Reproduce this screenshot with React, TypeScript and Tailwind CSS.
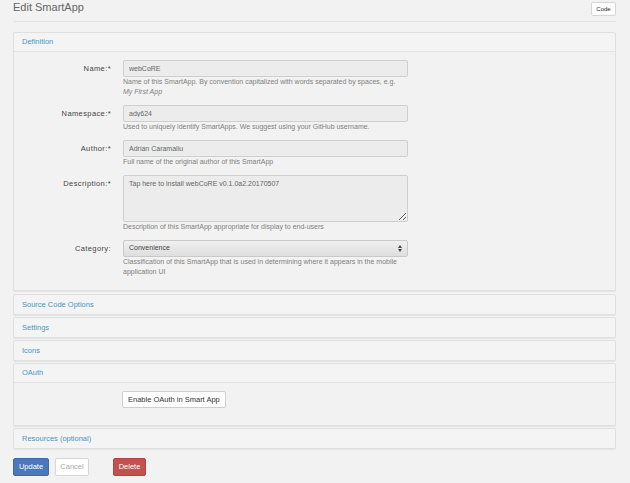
import React from 'react';

const FONT = { fontFamily: '"Liberation Sans", Arial, sans-serif' };

type FieldProps = {
  label: string;
  children: React.ReactNode;
  help?: React.ReactNode;
};

const Field: React.FC<FieldProps> = ({ label, children, help }) => (
  <div className="flex mb-[8px]">
    <div className="w-[97px] shrink-0 text-right text-[7.5px] leading-[17px] text-[#444] tracking-[0.4px]">
      {label}
    </div>
    <div className="ml-[12px] w-[285px]">
      {children}
      {help && <div className="text-[7px] leading-[10px] text-[#808080]">{help}</div>}
    </div>
  </div>
);

const inputCls =
  'block w-full h-[17px] rounded-[2px] border border-[#cfcfcf] bg-[#ececec] px-[5px] text-[7px] text-[#666] outline-none';

const Panel: React.FC<{ title: string; children?: React.ReactNode }> = ({ title, children }) => (
  <div className="mb-[2px] rounded-[2px] border border-[#e0e0e0] bg-[#f4f4f4] shadow-[0_1px_1px_rgba(0,0,0,0.06)]">
    <div className={`h-[19px] px-[8px] flex items-center text-[7.5px] text-[#4b94bf] ${children ? 'border-b border-[#e3e3e3]' : ''}`}>
      {title}
    </div>
    {children && <div className="bg-[#f2f2f2]">{children}</div>}
  </div>
);

export default function App() {
  return (
    <div className="w-[630px] h-[483px] bg-[#f2f2f2] overflow-hidden" style={FONT}>
      <div className="pl-[13px] pr-[14px]">
        {/* header */}
        <div className="flex items-start justify-between h-[22px] border-b border-[#e2e2e2]">
          <div className="text-[11px] font-light text-[#666] leading-[14px]">Edit SmartApp</div>
          <button className="mt-[2px] h-[14px] w-[25px] rounded-[2px] border border-[#d6d6d6] bg-white text-[6px] text-[#222]">
            Code
          </button>
        </div>

        <div className="mt-[10px]">
          <div className="mb-[3px]">
            <Panel title="Definition">
              <div className="pt-[8px] pb-[5px]">
                <Field
                  label="Name:*"
                  help={
                    <>
                      Name of this SmartApp. By convention capitalized with words separated by spaces, e.g.
                      <br />
                      <i>My First App</i>
                    </>
                  }
                >
                  <input className={inputCls} readOnly value="webCoRE" />
                </Field>
                <Field label="Namespace:*" help="Used to uniquely identify SmartApps. We suggest using your GitHub username.">
                  <input className={inputCls} readOnly value="ady624" />
                </Field>
                <Field label="Author:*" help="Full name of the original author of this SmartApp">
                  <input className={inputCls} readOnly value="Adrian Caramaliu" />
                </Field>
                <Field label="Description:*" help="Description of this SmartApp appropriate for display to end-users">
                  <textarea
                    className="block w-full h-[47px] rounded-[2px] border border-[#cfcfcf] bg-[#ececec] px-[5px] py-[3px] text-[7px] leading-[9px] text-[#666] outline-none"
                    readOnly
                    value="Tap here to install webCoRE v0.1.0a2.20170507"
                  />
                </Field>
                <Field
                  label="Category:"
                  help={
                    <>
                      Classification of this SmartApp that is used in determining where it appears in the mobile
                      <br />
                      application UI
                    </>
                  }
                >
                  <div className="flex items-center justify-between h-[17px] rounded-[2px] border border-[#c9c9c9] bg-gradient-to-b from-[#f0f0f0] to-[#dedede] px-[5px] text-[7px] text-[#444]">
                    <span>Convenience</span>
                    <svg width="4" height="7" viewBox="0 0 4 7">
                      <path d="M0 3 L2 0 L4 3 Z M0 4 L2 7 L4 4 Z" fill="#444" />
                    </svg>
                  </div>
                </Field>
              </div>
            </Panel>
          </div>
          <Panel title="Source Code Options" />
          <Panel title="Settings" />
          <Panel title="Icons" />
          <Panel title="OAuth">
            <div className="flex pt-[8px] pb-[17px] pl-[108px]">
              <button className="h-[17px] px-[5px] rounded-[2px] border border-[#cfcfcf] bg-white text-[7.5px] leading-none text-[#333]">
                Enable OAuth in Smart App
              </button>
            </div>
          </Panel>
          <Panel title="Resources (optional)" />
        </div>

        <div className="flex mt-[9px] text-[7.5px]">
          <button className="h-[18px] w-[36px] rounded-[2px] border border-[#3f6aa6] bg-[#4a78b8] text-white">Update</button>
          <button className="ml-[6px] h-[18px] w-[34px] rounded-[2px] border border-[#d6d6d6] bg-white text-[#aaa]">Cancel</button>
          <button className="ml-[24px] h-[18px] w-[33px] rounded-[2px] border border-[#b04643] bg-[#c2504d] text-white">Delete</button>
        </div>
      </div>
    </div>
  );
}
